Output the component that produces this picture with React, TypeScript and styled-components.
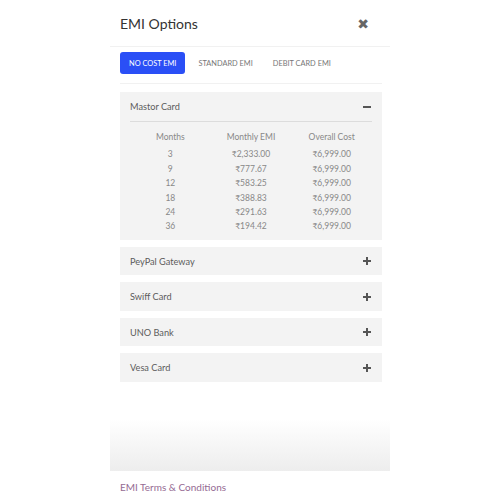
import React from "react";
import styled, { createGlobalStyle } from "styled-components";

const Global = createGlobalStyle`
  html, body { margin: 0; padding: 0; background: #fff; }
  body { font-family: "Lato", "Open Sans", sans-serif; color: #555; }
`;

const Page = styled.div`
  width: 500px;
  height: 500px;
  display: flex;
  justify-content: center;
  background: #fff;
`;

const Modal = styled.div`
  width: 280px;
  display: flex;
  flex-direction: column;
`;

const Header = styled.div`
  height: 46px;
  padding: 0 21px 0 10px;
  display: flex;
  align-items: center;
  justify-content: space-between;
  border-bottom: 1px solid #f1f1f1;
`;

const Title = styled.h1`
  margin: 0;
  font-size: 14px;
  font-weight: 400;
  color: #333;
`;

const Close = styled.span`
  font-size: 14px;
  color: #666;
  line-height: 1;
  font-family: "DejaVu Sans", sans-serif;
  margin-top: 2px;
`;

const Body = styled.div`
  padding: 5px 8px 0 10px;
`;

const Tabs = styled.div`
  display: flex;
  align-items: center;
  padding-bottom: 9px;
  border-bottom: 1px solid #f1f1f1;
`;

const Tab = styled.button<{ $active?: boolean }>`
  border: none;
  border-radius: 3px;
  height: 22px;
  padding: 0 ${(p) => (p.$active ? "9px" : "13px")};
  margin-right: ${(p) => (p.$active ? "0" : "-6px")};
  background: ${(p) => (p.$active ? "#2a4ff6" : "transparent")};
  color: ${(p) => (p.$active ? "#fff" : "#777")};
  font-family: "Lato", sans-serif;
  font-size: 7.4px;
  text-transform: uppercase;
  cursor: pointer;
`;

const Accordion = styled.div`
  display: flex;
  flex-direction: column;
  gap: 7px;
  padding-top: 8px;
`;

const Panel = styled.div`
  background: #f3f3f3;
  padding: 0 10px;
`;

const PanelHead = styled.div<{ $open?: boolean }>`
  height: ${(p) => (p.$open ? "29px" : "28.5px")};
  display: flex;
  align-items: center;
  justify-content: space-between;
  font-size: 9.2px;
  color: #5c5c5c;
  border-bottom: ${(p) => (p.$open ? "1px solid #dcdcdc" : "none")};
`;

const Sign = styled.svg`
  width: 8px;
  height: 8px;
  margin-right: 1px;
`;

const Table = styled.div`
  display: grid;
  grid-template-columns: repeat(3, 1fr);
  padding: 8px 0 6px;
`;

const Cell = styled.div<{ $head?: boolean }>`
  text-align: center;
  font-size: 8.5px;
  line-height: 14.4px;
  color: #888;
  margin-bottom: ${(p) => (p.$head ? "3px" : "0")};
`;

const Fade = styled.div`
  margin-top: 9px;
  height: 80px;
  background: linear-gradient(to bottom, #fff 0%, #fff 35%, #ededed 100%);
`;

const Terms = styled.a`
  margin: 10px 0 0 10px;
  font-size: 10px;
  color: #956b93;
  text-decoration: none;
`;

const Plus = () => (
  <Sign viewBox="0 0 8 8">
    <rect x="3" y="0" width="2" height="8" fill="#555" />
    <rect x="0" y="3" width="8" height="2" fill="#555" />
  </Sign>
);
const Minus = () => (
  <Sign viewBox="0 0 8 8">
    <rect x="0" y="3" width="8" height="2" fill="#555" />
  </Sign>
);

const rows = [
  ["3", "₹2,333.00", "₹6,999.00"],
  ["9", "₹777.67", "₹6,999.00"],
  ["12", "₹583.25", "₹6,999.00"],
  ["18", "₹388.83", "₹6,999.00"],
  ["24", "₹291.63", "₹6,999.00"],
  ["36", "₹194.42", "₹6,999.00"],
];

const others = ["PeyPal Gateway", "Swiff Card", "UNO Bank", "Vesa Card"];

export default function App() {
  return (
    <Page>
      <Global />
      <Modal>
        <Header>
          <Title>EMI Options</Title>
          <Close>✖</Close>
        </Header>
        <Body>
          <Tabs>
            <Tab $active>No Cost EMI</Tab>
            <Tab>Standard EMI</Tab>
            <Tab>Debit Card EMI</Tab>
          </Tabs>
          <Accordion>
            <Panel>
              <PanelHead $open>
                Mastor Card
                <Minus />
              </PanelHead>
              <Table>
                <Cell $head>Months</Cell>
                <Cell $head>Monthly EMI</Cell>
                <Cell $head>Overall Cost</Cell>
                {rows.map((r) =>
                  r.map((c, i) => <Cell key={r[0] + i}>{c}</Cell>)
                )}
              </Table>
            </Panel>
            {others.map((o) => (
              <Panel key={o}>
                <PanelHead>
                  {o}
                  <Plus />
                </PanelHead>
              </Panel>
            ))}
          </Accordion>
        </Body>
        <Fade />
        <Terms href="#">EMI Terms &amp; Conditions</Terms>
      </Modal>
    </Page>
  );
}
